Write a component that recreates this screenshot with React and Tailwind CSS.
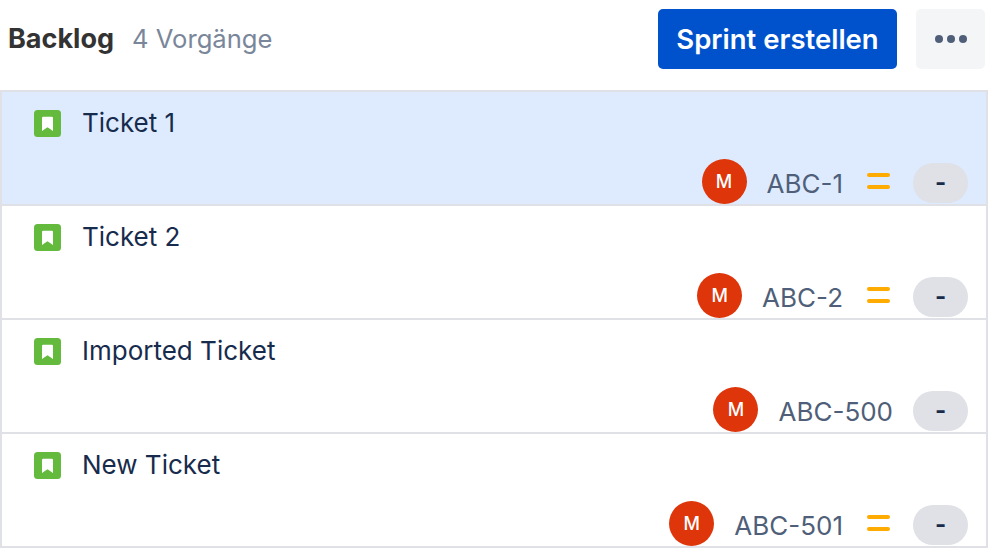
import React from 'react';

const tickets = [
  { title: 'Ticket 1', key: 'ABC-1', selected: true, priority: true },
  { title: 'Ticket 2', key: 'ABC-2', priority: true },
  { title: 'Imported Ticket', key: 'ABC-500' },
  { title: 'New Ticket', key: 'ABC-501', priority: true },
];

function StoryIcon() {
  return (
    <svg width="27" height="27" viewBox="0 0 27 27" className="shrink-0">
      <rect width="27" height="27" rx="3.5" fill="#63ba3c" />
      <path d="M8 8a1.2 1.2 0 0 1 1.2-1.2h8.6a1.2 1.2 0 0 1 1.2 1.2v13l-5.5-3.8-5.5 3.8z" fill="#fff" />
    </svg>
  );
}

function PriorityIcon() {
  return (
    <svg width="23" height="16" viewBox="0 0 23 16" className="shrink-0">
      <rect x="0" y="0" width="23" height="4" rx="2" fill="#ffab00" />
      <rect x="0" y="12" width="23" height="4" rx="2" fill="#ffab00" />
    </svg>
  );
}

function TicketRow({ ticket }) {
  return (
    <div className={`h-[114px] border-b-2 border-[#dfe1e6] flex flex-col justify-between ${ticket.selected ? 'bg-[#deebff]' : 'bg-white'}`}>
      <div className="flex items-center gap-[21px] pl-[32px] pt-[16px]">
        <StoryIcon />
        <span className="text-[26px] leading-[30px] text-[#172b4d]">{ticket.title}</span>
      </div>
      <div className="flex items-center justify-end pr-[18px]">
        <div className="w-[45px] h-[45px] rounded-full bg-[#de350b] text-white text-[18px] font-medium flex items-center justify-center">M</div>
        <span className="ml-[20px] text-[26px] leading-[30px] text-[#505f79] mt-[4px]">{ticket.key}</span>
        {ticket.priority && <div className="ml-[24px] mb-[2px] flex"><PriorityIcon /></div>}
        <div className={`${ticket.priority ? 'ml-[23px]' : 'ml-[20px]'} mt-[2px] w-[55px] h-[40px] rounded-full bg-[#dfe1e6] text-[#172b4d] text-[24px] font-bold flex items-center justify-center`}>-</div>
      </div>
    </div>
  );
}

export default function App() {
  return (
    <div className="w-[998px] h-[559px] bg-white font-['Inter',sans-serif] overflow-hidden">
      <div className="h-[90px] flex items-start pl-[8px] pr-[13px] pt-[9px]">
        <div className="flex items-center h-[60px] gap-[18px]">
          <span className="text-[27px] font-bold text-[#333333]">Backlog</span>
          <span className="text-[25.6px] text-[#7a869a]">4 Vorgänge</span>
        </div>
        <div className="ml-auto flex gap-[19px]">
          <button className="w-[239px] h-[60px] pt-[2px] rounded-[5px] bg-[#0052cc] text-white text-[27.5px] font-semibold">Sprint erstellen</button>
          <button className="w-[69px] h-[60px] rounded-[5px] bg-[#f4f5f7] flex items-center justify-center gap-[4px]">
            <span className="w-[8px] h-[8px] rounded-full bg-[#505f79]" />
            <span className="w-[8px] h-[8px] rounded-full bg-[#505f79]" />
            <span className="w-[8px] h-[8px] rounded-full bg-[#505f79]" />
          </button>
        </div>
      </div>
      <div className="w-[988px] border-x-2 border-t-2 border-[#dfe1e6]">
        {tickets.map(t => <TicketRow key={t.key} ticket={t} />)}
      </div>
    </div>
  );
}
